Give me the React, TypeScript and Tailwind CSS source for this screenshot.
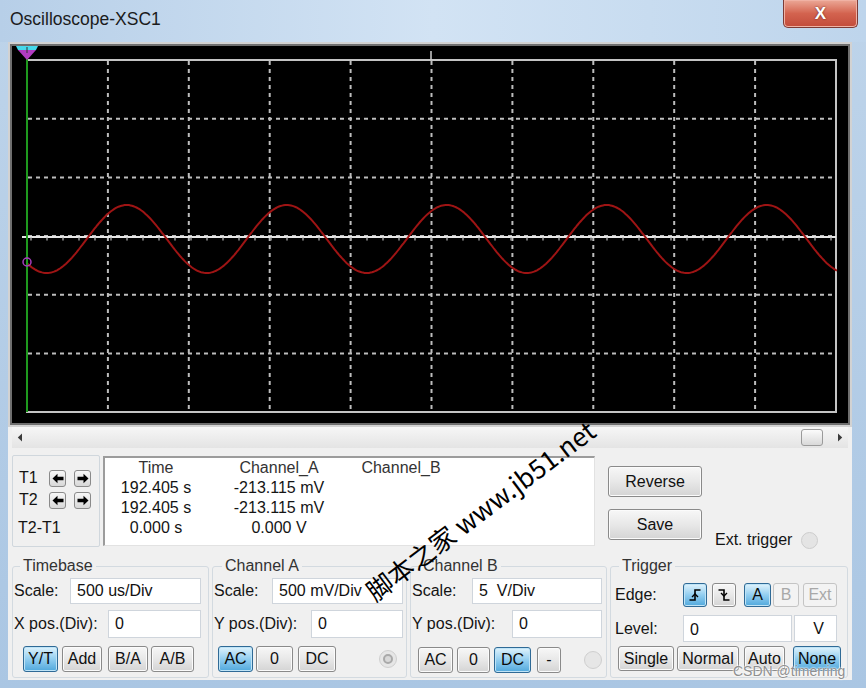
import React from "react";

const VX = [1, 2, 3, 4, 5, 6, 7, 8, 9].map((i) => 27 + i * 80.9);
const HY = [1, 2, 3, 4, 5].map((j) => 60 + j * 58.7);

function sinePath() {
  let d = "";
  for (let x = 27; x <= 838; x += 1.5) {
    const y = 239 + 34 * Math.cos((2 * Math.PI * (x - 46.7)) / 160);
    d += (d ? " L" : "M") + x.toFixed(1) + " " + y.toFixed(1);
  }
  return d;
}

function tickPath() {
  let d = "";
  for (let x = 31; x < 836; x += 16) d += `M${x} 237.5 v3 `;
  return d;
}

type BP = { className: string; sel?: boolean; dis?: boolean; children: React.ReactNode };
function Btn({ className, sel, dis, children }: BP) {
  const v = sel
    ? "border-[#2f6a96] bg-linear-to-b from-[#e0f3fc] via-[#92cef0] to-[#4fa8dc] shadow-[inset_0_0_0_1px_#bfe4f7] text-[#0a0a0a]"
    : dis
    ? "border-[#c4c4c4] bg-[#f3f3f3] text-[#a8a8a8]"
    : "border-[#8a8a8a] bg-linear-to-b from-[#f7f7f7] via-[#e8e8e8] to-[#d4d4d4] shadow-[inset_0_0_0_1px_#fbfbfb] text-[#111]";
  return (
    <div className={`flex items-center justify-center rounded-[3px] border text-[16px] leading-none ${v} ${className}`}>
      {children}
    </div>
  );
}

function Field({ className, children }: { className: string; children: React.ReactNode }) {
  return (
    <div className={`flex items-center bg-white border border-[#cfd5dc] pl-[6px] text-[16px] text-[#111] ${className}`}>
      {children}
    </div>
  );
}

function ArrowBtn({ dir }: { dir: "l" | "r" }) {
  return (
    <div className="w-[17px] h-[17px] rounded-[3px] border border-[#8a8a8a] bg-linear-to-b from-[#f7f7f7] to-[#d8d8d8] flex items-center justify-center">
      <svg width="12" height="11" viewBox="0 0 12 11">
        {dir === "l" ? (
          <path d="M0.5 5.5 L5.5 0.8 V3.8 H11.5 V7.2 H5.5 V10.2 Z" fill="#000" />
        ) : (
          <path d="M11.5 5.5 L6.5 0.8 V3.8 H0.5 V7.2 H6.5 V10.2 Z" fill="#000" />
        )}
      </svg>
    </div>
  );
}

function Led({ dot }: { dot?: boolean }) {
  return (
    <div className="w-[18px] h-[18px] rounded-full border border-[#cfcfcf] bg-[#e6e6e6] flex items-center justify-center">
      {dot && <div className="w-[10px] h-[10px] rounded-full border-[2px] border-[#a9a9a9] bg-[#d8d8d8]" />}
    </div>
  );
}

export default function App() {
  return (
    <div className="relative w-[866px] h-[688px] overflow-hidden bg-linear-to-b from-[#bed4ea] to-[#aac6e3] font-[family-name:Liberation_Sans,Arial,sans-serif] text-[#141414] flex flex-col">
      {/* Title bar */}
      <div className="h-[42px] flex items-start bg-linear-to-r from-[#b7cfe8] via-[#d2e3f4] to-[#bed5ec]">
        <div className="pl-[10px] pt-[8px] text-[17.5px] leading-[22px] text-[#1b1b1b]">Oscilloscope-XSC1</div>
        <div className="ml-auto mr-[8px] w-[75px] h-[28px] rounded-b-[5px] border border-t-0 border-[#7c3b36] bg-linear-to-b from-[#eba897] via-[#d3634f] to-[#c24b3a] shadow-[inset_0_0_0_1px_#f0b2a4] flex items-center justify-center">
          <span className="text-white font-bold text-[17px] leading-none [text-shadow:0_0_2px_#5a1a14]">X</span>
        </div>
      </div>

      {/* Body */}
      <div className="ml-[8px] w-[844px] h-[638px] bg-[#f0f0f0] flex flex-col">
        {/* Scope display */}
        <div className="h-[385px] border-2 border-[#d2d2d2]">
          <div className="w-full h-full border-2 border-[#6f6f6f] bg-black">
            <svg width="836" height="377" viewBox="12 46 836 377" className="block">
              <rect x="27" y="60" width="809" height="352" fill="none" stroke="#c4c4c4" strokeWidth="2" />
              {VX.map((x) => (
                <line key={"v" + x} x1={x} y1={61} x2={x} y2={411} stroke="#bdbdbd" strokeWidth="2" strokeDasharray="4 4" />
              ))}
              {HY.map((y) => (
                <line key={"h" + y} x1={28} y1={y} x2={835} y2={y} stroke="#bdbdbd" strokeWidth="2" strokeDasharray="4 4" />
              ))}
              <line x1="431" y1="51" x2="431" y2="60" stroke="#cfcfcf" strokeWidth="1.5" />
              {/* channel B trace */}
              <line x1="22" y1="237" x2="836" y2="237" stroke="#e6e6e6" strokeWidth="2" />
              <path d={tickPath()} stroke="#9a9a9a" strokeWidth="1.5" fill="none" />
              {/* channel A sine */}
              <path d={sinePath()} stroke="#9e1414" strokeWidth="2" fill="none" />
              {/* cursor */}
              <line x1="27" y1="50" x2="27" y2="412" stroke="#1e9a1e" strokeWidth="2" />
              <polygon points="16,46 38,46 36,50 18,50" fill="#45d8ea" />
              <polygon points="18,50 36,50 27,60" fill="#b23cc2" />
              <line x1="27" y1="47" x2="27" y2="53" stroke="#333" strokeWidth="1" />
              <circle cx="27" cy="262" r="4" fill="none" stroke="#a63cbd" strokeWidth="1.5" />
            </svg>
          </div>
        </div>

        {/* Scrollbar */}
        <div className="mx-[4px] h-[21px] flex items-center bg-linear-to-b from-[#f6f6f6] to-[#e4e4e4]">
          <div className="w-[16px] flex justify-center">
            <svg width="6" height="9" viewBox="0 0 6 9">
              <path d="M5 0.5 L0.8 4.5 L5 8.5 Z" fill="#3a3a3a" />
            </svg>
          </div>
          <div className="flex-1 h-full flex items-center justify-end pr-[9px]">
            <div className="w-[22px] h-[17px] rounded-[3px] border border-[#9a9a9a] bg-linear-to-b from-[#fbfbfb] to-[#d9d9d9]" />
          </div>
          <div className="w-[16px] flex justify-center">
            <svg width="6" height="9" viewBox="0 0 6 9">
              <path d="M1 0.5 L5.2 4.5 L1 8.5 Z" fill="#3a3a3a" />
            </svg>
          </div>
        </div>

        {/* Middle */}
        <div className="h-[109px] flex items-start pl-[4px]">
          <div className="mt-[7px] w-[88px] h-[92px] rounded-[2px] border border-[#d0d7dd] flex flex-col pt-[13px] text-[16px]">
            <div className="h-[18px] flex items-center">
              <div className="w-[36px] pl-[6px]">T1</div>
              <ArrowBtn dir="l" />
              <div className="w-[8px]" />
              <ArrowBtn dir="r" />
            </div>
            <div className="mt-[4px] h-[18px] flex items-center">
              <div className="w-[36px] pl-[6px]">T2</div>
              <ArrowBtn dir="l" />
              <div className="w-[8px]" />
              <ArrowBtn dir="r" />
            </div>
            <div className="mt-[10px] h-[18px] flex items-center pl-[5px]">T2-T1</div>
          </div>

          <div className="mt-[8px] ml-[3px] w-[492px] h-[90px] bg-white border-t-2 border-l-2 border-[#9c9c9c] border-r border-b border-r-[#e2e2e2] border-b-[#e2e2e2] grid grid-cols-[102px_144px_100px] auto-rows-[20px] text-[16px] leading-[20px] text-center">
            <div className="text-[#333]">Time</div>
            <div className="text-[#333]">Channel_A</div>
            <div className="text-[#333]">Channel_B</div>
            <div>192.405 s</div>
            <div>-213.115 mV</div>
            <div></div>
            <div>192.405 s</div>
            <div>-213.115 mV</div>
            <div></div>
            <div>0.000 s</div>
            <div>0.000 V</div>
            <div></div>
          </div>

          <div className="mt-[18px] ml-[13px] w-[94px] flex flex-col gap-[12px]">
            <Btn className="h-[31px] w-[94px]">Reverse</Btn>
            <Btn className="h-[31px] w-[94px]">Save</Btn>
          </div>

          <div className="mt-[83px] ml-[13px] h-[18px] flex items-center gap-[9px] text-[16px]">
            <span>Ext. trigger</span>
            <div className="w-[17px] h-[17px] rounded-full border border-[#cdcdcd] bg-[#e4e4e4]" />
          </div>
        </div>

        {/* Groups */}
        <div className="h-[123px] flex items-start pl-[4px] gap-[3px] text-[16px]">
          {/* Timebase */}
          <fieldset className="w-[197px] h-[121px] border border-[#d3dae0] rounded-[3px]">
            <legend className="ml-[7px] px-[3px] leading-[18px] text-[#333]">Timebase</legend>
            <div className="mt-[3px] h-[26px] flex items-center">
              <span className="pl-[1px]">Scale:</span>
              <Field className="ml-auto mr-[7px] w-[131px] h-[26px]">500 us/Div</Field>
            </div>
            <div className="mt-[6px] h-[28px] flex items-center">
              <span className="pl-[1px]">X pos.(Div):</span>
              <Field className="ml-auto mr-[7px] w-[93px] h-[28px]">0</Field>
            </div>
            <div className="mt-[8px] h-[26px] flex items-center pl-[10px]">
              <Btn sel className="w-[35px] h-[26px]">Y/T</Btn>
              <Btn className="ml-[4px] w-[40px] h-[26px]">Add</Btn>
              <Btn className="ml-[6px] w-[40px] h-[26px]">B/A</Btn>
              <Btn className="ml-[3px] w-[43px] h-[26px]">A/B</Btn>
            </div>
          </fieldset>

          {/* Channel A */}
          <fieldset className="w-[195px] h-[121px] border border-[#d3dae0] rounded-[3px]">
            <legend className="ml-[9px] px-[3px] leading-[18px] text-[#333]">Channel A</legend>
            <div className="mt-[3px] h-[26px] flex items-center">
              <span className="pl-[1px]">Scale:</span>
              <Field className="ml-auto mr-[3px] w-[131px] h-[26px]">500 mV/Div</Field>
            </div>
            <div className="mt-[6px] h-[28px] flex items-center">
              <span className="pl-[1px]">Y pos.(Div):</span>
              <Field className="ml-auto mr-[3px] w-[92px] h-[28px]">0</Field>
            </div>
            <div className="mt-[8px] h-[26px] flex items-center pl-[5px]">
              <Btn sel className="w-[35px] h-[26px]">AC</Btn>
              <Btn className="ml-[3px] w-[37px] h-[26px]">0</Btn>
              <Btn className="ml-[5px] w-[38px] h-[26px]">DC</Btn>
              <div className="ml-auto mr-[9px]">
                <Led dot />
              </div>
            </div>
          </fieldset>

          {/* Channel B */}
          <fieldset className="w-[197px] h-[121px] border border-[#d3dae0] rounded-[3px]">
            <legend className="ml-[9px] px-[3px] leading-[18px] text-[#333]">Channel B</legend>
            <div className="mt-[3px] h-[26px] flex items-center">
              <span className="pl-[1px]">Scale:</span>
              <Field className="ml-auto mr-[4px] w-[130px] h-[26px]">
                <span className="whitespace-pre">5  V/Div</span>
              </Field>
            </div>
            <div className="mt-[6px] h-[28px] flex items-center">
              <span className="pl-[1px]">Y pos.(Div):</span>
              <Field className="ml-auto mr-[4px] w-[90px] h-[28px]">0</Field>
            </div>
            <div className="mt-[9px] h-[26px] flex items-center pl-[7px]">
              <Btn className="w-[35px] h-[26px]">AC</Btn>
              <Btn className="ml-[4px] w-[33px] h-[26px]">0</Btn>
              <Btn sel className="ml-[4px] w-[37px] h-[26px]">DC</Btn>
              <Btn className="ml-[6px] w-[24px] h-[26px]">-</Btn>
              <div className="ml-auto mr-[4px]">
                <Led />
              </div>
            </div>
          </fieldset>

          {/* Trigger */}
          <fieldset className="w-[238px] h-[121px] border border-[#d3dae0] rounded-[3px]">
            <legend className="ml-[8px] px-[3px] leading-[18px] text-[#333]">Trigger</legend>
            <div className="mt-[8px] h-[24px] flex items-center">
              <span className="w-[72px] pl-[4px]">Edge:</span>
              <Btn sel className="w-[24px] h-[24px]">
                <svg width="16" height="16" viewBox="0 0 16 16">
                  <path d="M2.5 13 H8 V3 H13.5" stroke="#000" strokeWidth="1.6" fill="none" />
                  <path d="M5 10 L8 7 L11 10" stroke="#000" strokeWidth="1.4" fill="none" />
                </svg>
              </Btn>
              <Btn className="ml-[5px] w-[24px] h-[24px]">
                <svg width="16" height="16" viewBox="0 0 16 16">
                  <path d="M2.5 3 H8 V13 H13.5" stroke="#000" strokeWidth="1.6" fill="none" />
                  <path d="M5 6 L8 9 L11 6" stroke="#000" strokeWidth="1.4" fill="none" />
                </svg>
              </Btn>
              <Btn sel className="ml-[8px] w-[27px] h-[24px]">A</Btn>
              <Btn dis className="ml-[2px] w-[26px] h-[24px]">B</Btn>
              <Btn dis className="ml-[4px] w-[34px] h-[24px]">Ext</Btn>
            </div>
            <div className="mt-[8px] h-[27px] flex items-center">
              <span className="w-[72px] pl-[4px]">Level:</span>
              <Field className="w-[109px] h-[27px] pt-[3px]">0</Field>
              <Field className="ml-[2px] w-[43px] h-[27px] pl-0 justify-center">V</Field>
            </div>
            <div className="mt-[4px] h-[25px] flex items-center pl-[7px]">
              <Btn className="w-[56px] h-[25px]">Single</Btn>
              <Btn className="ml-[3px] w-[62px] h-[25px]">Normal</Btn>
              <Btn className="ml-[5px] w-[41px] h-[25px]">Auto</Btn>
              <Btn sel className="ml-[8px] w-[48px] h-[25px]">None</Btn>
            </div>
          </fieldset>
        </div>
      </div>

      {/* Watermarks */}
      <div className="absolute left-[480px] top-[510px] -translate-x-1/2 -translate-y-1/2 rotate-[-37deg] whitespace-nowrap text-[26px] leading-none text-black font-[family-name:Noto_Sans_CJK_SC,sans-serif]">
        脚本之家 www.jb51.net
      </div>
      <div className="absolute left-[733px] top-[663px] text-[14px] leading-[16px] text-[#8f8f8f] [text-shadow:0_0_2px_#fff,0_0_2px_#fff]">
        CSDN @timerring
      </div>
    </div>
  );
}
